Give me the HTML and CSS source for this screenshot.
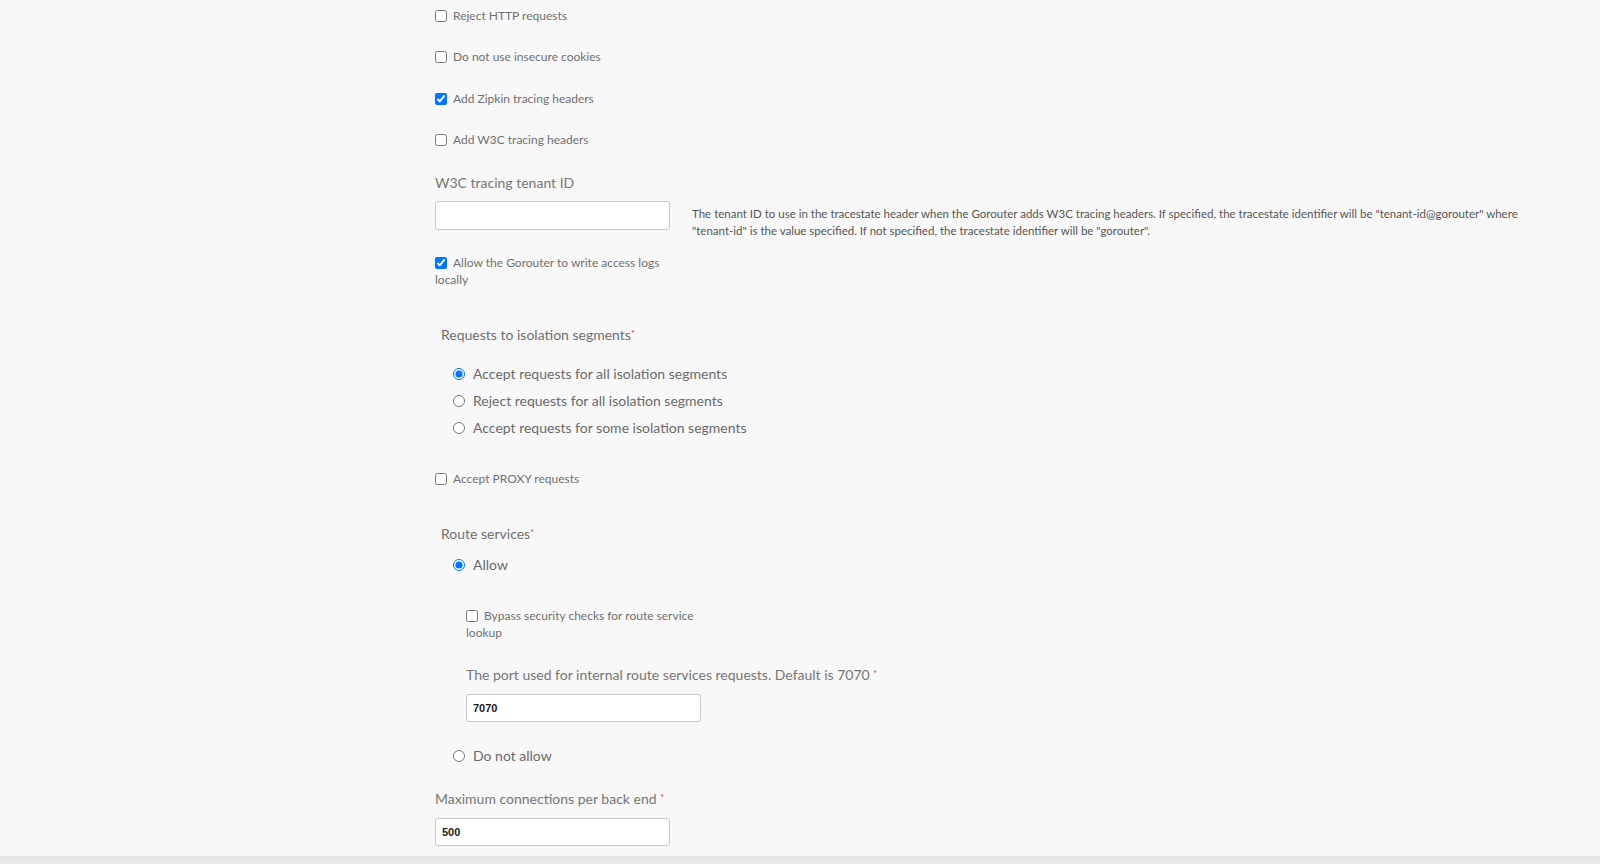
FILE: index.html
```html
<!DOCTYPE html>
<html lang="en">
<head>
<meta charset="utf-8">
<title>Gorouter settings</title>
<link rel="stylesheet" href="styles.css">
</head>
<body>
<div class="page">
  <form class="form">
    <label class="check first"><input type="checkbox"><span>Reject HTTP requests</span></label>
    <label class="check"><input type="checkbox"><span>Do not use insecure cookies</span></label>
    <label class="check"><input type="checkbox" checked><span>Add Zipkin tracing headers</span></label>
    <label class="check"><input type="checkbox"><span>Add W3C tracing headers</span></label>

    <div class="field-label tenant-label">W3C tracing tenant ID</div>
    <div class="field-row">
      <input class="text-input" type="text" value="">
      <p class="help">The tenant ID to use in the tracestate header when the Gorouter adds W3C tracing headers. If specified, the tracestate identifier will be "tenant-id@gorouter" where "tenant-id" is the value specified. If not specified, the tracestate identifier will be "gorouter".</p>
    </div>

    <label class="check wrap access-logs"><input type="checkbox" checked><span>Allow the Gorouter to write access logs locally</span></label>

    <div class="group-label iso-label">Requests to isolation segments<sup>*</sup></div>
    <div class="radios iso-radios">
      <label class="radio"><input type="radio" name="iso" checked><span>Accept requests for all isolation segments</span></label>
      <label class="radio"><input type="radio" name="iso"><span>Reject requests for all isolation segments</span></label>
      <label class="radio"><input type="radio" name="iso"><span>Accept requests for some isolation segments</span></label>
    </div>

    <label class="check proxy"><input type="checkbox"><span>Accept PROXY requests</span></label>

    <div class="group-label route-label">Route services<sup>*</sup></div>
    <div class="radios route-radios">
      <label class="radio"><input type="radio" name="route" checked><span>Allow</span></label>
      <div class="nested">
        <label class="check wrap bypass"><input type="checkbox"><span>Bypass security checks for route service lookup</span></label>
        <div class="field-label port-label">The port used for internal route services requests. Default is 7070 <sup>*</sup></div>
        <input class="text-input port-input" type="text" value="7070">
      </div>
      <label class="radio not-allow"><input type="radio" name="route"><span>Do not allow</span></label>
    </div>

    <div class="field-label max-label">Maximum connections per back end <sup>*</sup></div>
    <input class="text-input max-input" type="text" value="500">
  </form>
  <div class="bottom-bar"></div>
</div>
</body>
</html>
```
FILE: styles.css
```css
html, body {
  margin: 0;
  padding: 0;
}

body {
  background: #f8f8f8;
  font-family: Lato, "Open Sans", "Noto Sans", sans-serif;
  color: #6f6f6f;
}

.page {
  height: 864px;
  display: flex;
  flex-direction: column;
  overflow: hidden;
}

.form {
  flex: 1;
  padding: 6.5px 0 0 435px;
  display: flex;
  flex-direction: column;
  align-items: flex-start;
  overflow: hidden;
}

.bottom-bar {
  height: 7px;
  background: #e9e9e9;
  border-top: 1px solid #e2e2e2;
}

/* checkboxes */
.check {
  display: block;
  font-size: 12px;
  line-height: 18px;
  color: #707070;
  margin-top: 23.5px;
}
.check.first { margin-top: 0; }
.check input {
  width: 12px;
  height: 12px;
  margin: 0 6px 0 0;
  vertical-align: -2px;
}
.check.wrap {
  width: 235px;
  line-height: 17.5px;
}

/* labels */
.field-label {
  font-size: 14px;
  line-height: 20px;
  color: #767676;
}
.group-label {
  font-size: 14px;
  line-height: 20px;
  color: #6e6e6e;
  margin-left: 6px;
}
sup {
  color: #e0403a;
  font-size: 9px;
  vertical-align: 3px;
  line-height: 0;
}

.tenant-label { margin-top: 24px; }

.field-row {
  display: flex;
  align-items: flex-start;
  margin-top: 8px;
}

.text-input {
  box-sizing: border-box;
  width: 235px;
  height: 29px;
  border: 1px solid #c8c8c8;
  border-radius: 3px;
  background: #fff;
  padding: 0 6px;
  font-family: "Liberation Sans", Arial, sans-serif;
  font-size: 11px;
  font-weight: bold;
  color: #1a1a1a;
  outline: none;
}

.help {
  margin: 5px 0 0 22px;
  width: 848px;
  font-size: 11.5px;
  line-height: 16.5px;
  color: #555;
}

.access-logs { margin-top: 14.5px; }

.iso-label { margin-top: 36px; }

.radios {
  display: flex;
  flex-direction: column;
  align-items: flex-start;
}
.radio {
  display: block;
  font-size: 14px;
  line-height: 27px;
  color: #6a6a6a;
  margin-left: 18px;
}
.radio input {
  width: 12px;
  height: 12px;
  margin: 0 8px 0 0;
  vertical-align: -1px;
}

.iso-radios { margin-top: 15.5px; }

.proxy { margin-top: 28.5px; }

.route-label { margin-top: 36px; }
.route-radios { margin-top: 7.5px; }

.nested {
  margin-left: 31px;
  display: flex;
  flex-direction: column;
  align-items: flex-start;
}
.bypass { margin-top: 28.5px; }
.port-label { margin-top: 23.5px; }
.port-input {
  margin-top: 8.5px;
  height: 28px;
}
.not-allow { margin-top: 20.5px; }

.max-label { margin-top: 19.5px; }
.max-input {
  margin-top: 9px;
  height: 28.5px;
}
```
